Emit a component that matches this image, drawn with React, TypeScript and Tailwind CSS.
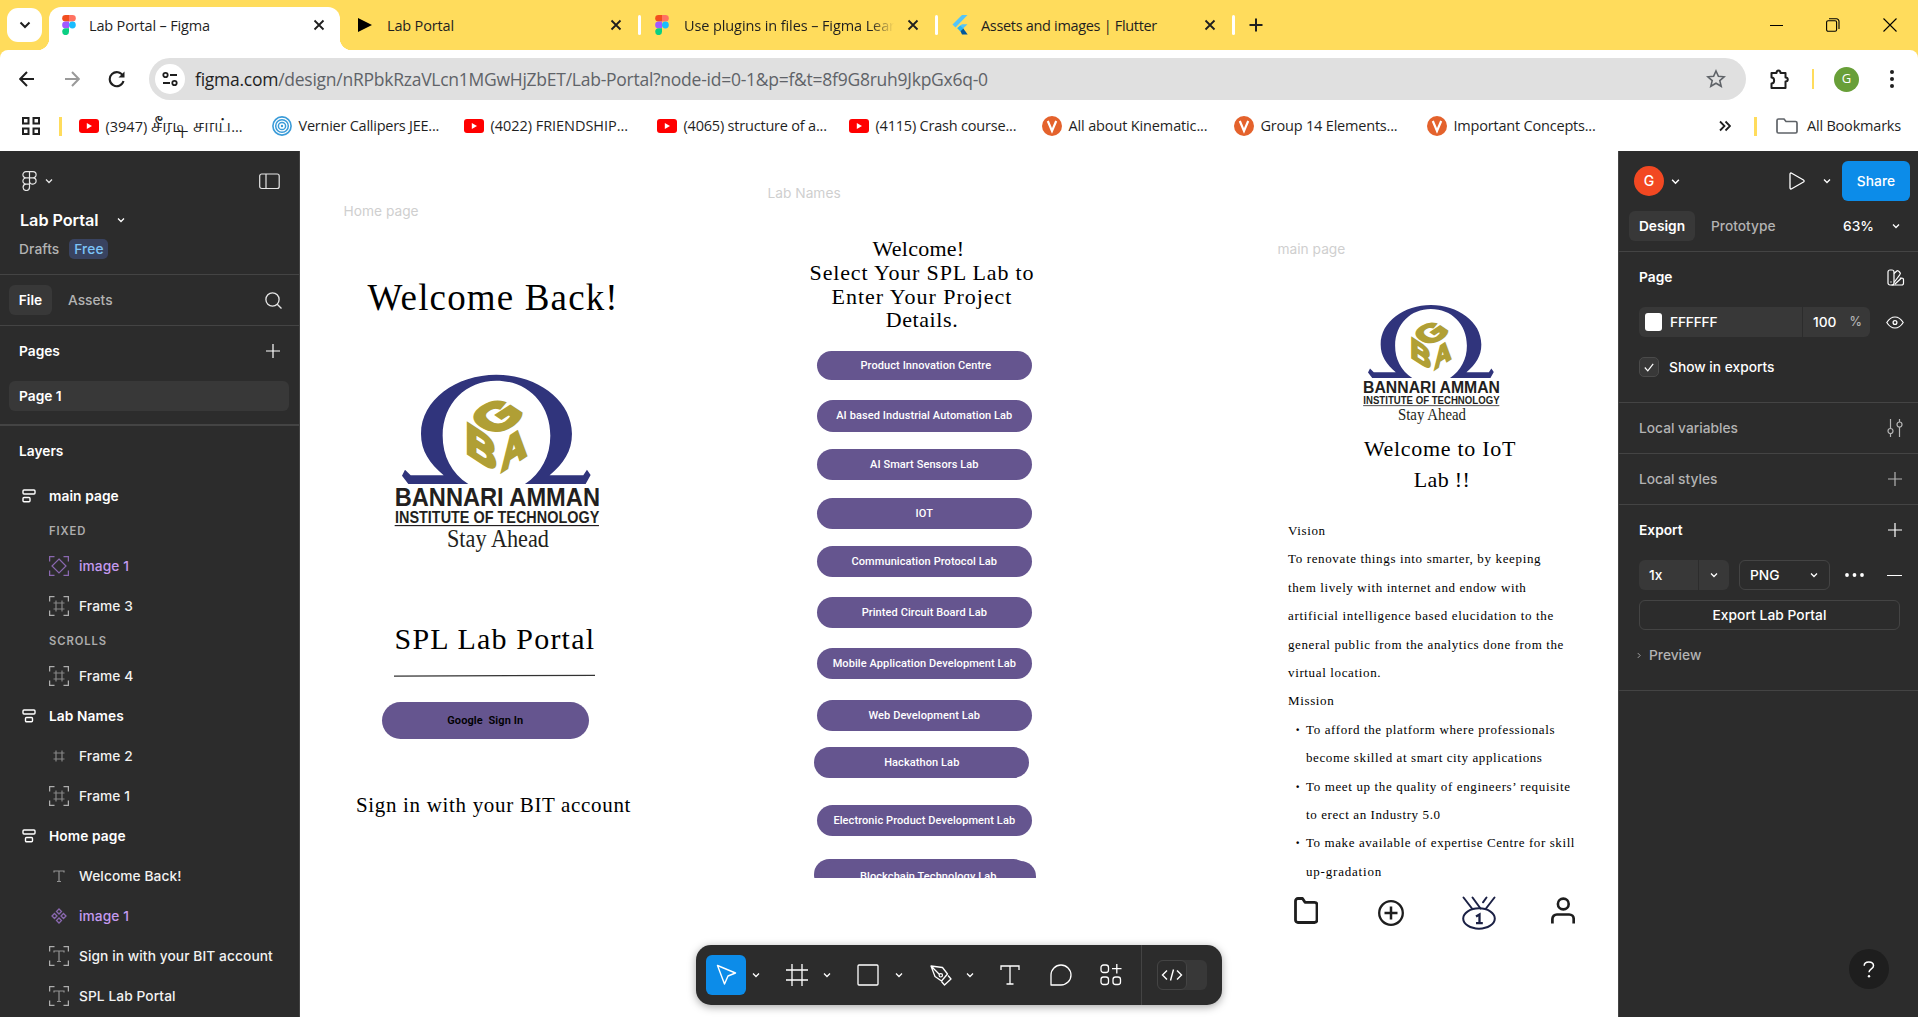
import type { ReactNode } from "react";

type IconProps = { className?: string; children?: ReactNode; box?: string };

function Line({ className = "", children, box = "0 0 24 24" }: IconProps) {
  return (
    <svg viewBox={box} className={`block shrink-0 ${className}`} fill="none" stroke="currentColor">
      {children}
    </svg>
  );
}

/* ---------- shared icons ---------- */

const Chevron = ({ className = "" }: { className?: string }) => (
  <Line box="0 0 8 8" className={`h-2 w-2 ${className}`}>
    <path d="M1 2.500 4 5.500 7 2.500" strokeWidth="1.300" />
  </Line>
);

const Close = () => (
  <Line box="0 0 12 12" className="h-3 w-3 text-[#1f1f1f]">
    <path d="M1.500 1.500l9 9M10.500 1.500l-9 9" strokeWidth="1.800" />
  </Line>
);

const Plus = ({ className = "" }: { className?: string }) => (
  <Line box="0 0 14 14" className={`h-[14px] w-[14px] ${className}`}>
    <path d="M7 0v14M0 7h14" strokeWidth="1.200" />
  </Line>
);

const FigmaLogo = () => (
  <svg viewBox="0 0 14 20" className="block h-5 w-[14px] shrink-0">
    <path d="M3.500 0H7v6.600H3.500a3.300 3.300 0 0 1 0-6.600z" fill="#f24e1e" />
    <path d="M7 0h3.500a3.300 3.300 0 0 1 0 6.600H7z" fill="#ff7262" />
    <path d="M3.500 6.600H7v6.700H3.500a3.300 3.300 0 0 1 0-6.700z" fill="#a259ff" />
    <circle cx="10.400" cy="10" r="3.400" fill="#1abcfe" />
    <path d="M3.500 13.300H7v3.400a3.400 3.400 0 1 1-3.500-3.400z" fill="#0acf83" />
  </svg>
);

const FlutterLogo = () => (
  <svg viewBox="0 0 16 20" className="block h-5 w-4 shrink-0">
    <path d="M10 0h5.500L3.500 12.500.5 9.600z" fill="#54c5f8" />
    <path d="M10 9.200h5.500L8.500 16 5.300 13z" fill="#54c5f8" />
    <path d="M5.300 13.200l3-2.600 3.200 3-3 2.800z" fill="#29b6f6" />
    <path d="M8.500 16.200l2.800-2.600 4.400 6H10z" fill="#01579b" />
  </svg>
);

/* ---------- browser chrome ---------- */

function Tab({ icon, title, fade, divider, track }: { icon: ReactNode; title: string; fade?: boolean; divider?: boolean; track: string }) {
  return (
    <div className="flex h-[50px] w-[297px] shrink-0 items-center">
      <div className="flex w-[294px] items-center pl-[14px]">
        <div className="flex w-[29px] shrink-0">{icon}</div>
        <div className={`w-[212px] overflow-hidden whitespace-nowrap pt-[2px] ${track} ${fade ? "[mask-image:linear-gradient(to_right,black_88%,transparent_99%)]" : ""}`}>{title}</div>
        <div className="ml-[11px]"><Close /></div>
      </div>
      {divider && <div className="h-5 w-[3px] rounded bg-white" />}
    </div>
  );
}

function TabStrip() {
  return (
    <div className="relative flex h-[50px] shrink-0 items-center text-[14.500px] text-[#1f1f1f]">
      <div className="ml-[7px] flex h-[34px] w-[35px] items-center justify-center rounded-[11px] bg-white">
        <Line box="0 0 12 12" className="h-3 w-3"><path d="M1.500 3.500 6 8l4.500-4.500" strokeWidth="2" /></Line>
      </div>
      <div className="relative ml-[7px] mt-[7px] flex h-[43px] w-[291px] shrink-0 items-center rounded-t-[12px] bg-white pb-[7px] pl-[13px]">
        <div className="absolute bottom-0 -left-3 h-3 w-3 bg-[radial-gradient(circle_at_0_0,transparent_12px,white_12.500px)]" />
        <div className="absolute -right-3 bottom-0 h-3 w-3 bg-[radial-gradient(circle_at_100%_0,transparent_12px,white_12.500px)]" />
        <div className="flex w-[27px]"><FigmaLogo /></div>
        <div className="w-[224px] whitespace-nowrap pt-[2px] tracking-[-0.16px]">Lab Portal – Figma</div>
        <Close />
      </div>
      <div className="ml-[4px] flex">
        <Tab icon={<svg viewBox="0 0 14 14" className="h-[14px] w-[14px]"><path d="M0 0l14 7-14 7z" fill="#000" /></svg>} title="Lab Portal" divider track="tracking-[-0.16px]" />
        <Tab icon={<FigmaLogo />} title="Use plugins in files – Figma Learn" fade divider track="tracking-[-0.1px]" />
        <Tab icon={<FlutterLogo />} title="Assets and images | Flutter" divider track="tracking-[-0.32px]" />
      </div>
      <Line box="0 0 14 14" className="ml-[14px] h-[14px] w-[14px]"><path d="M7 .5v13M.5 7h13" strokeWidth="2" /></Line>
      <div className="ml-auto mr-[21px] flex items-center gap-[43px] text-black">
        <div className="h-px w-[13px] bg-black" />
        <Line box="0 0 14 14" className="h-[14px] w-[14px]">
          <rect x=".6" y="2.800" width="10" height="10.500" rx="1.500" strokeWidth="1.100" />
          <path d="M3 .8h7.500a2.500 2.500 0 0 1 2.500 2.500V11" strokeWidth="1.100" />
        </Line>
        <Line box="0 0 14 14" className="h-[14px] w-[14px]"><path d="M.5.5l13 13M13.500.5l-13 13" strokeWidth="1.100" /></Line>
      </div>
    </div>
  );
}

function AddressBar() {
  return (
    <div className="flex h-[58px] shrink-0 items-center rounded-t-[8px] bg-white text-[#1f1f1f]">
      <Line box="0 0 16 16" className="ml-[19px] h-4 w-4"><path d="M15 8H1.500M8 1 1.200 8 8 15" strokeWidth="2" /></Line>
      <Line box="0 0 16 16" className="ml-[29px] h-4 w-4 text-[#9a9a9a]"><path d="M1 8h13.500M8 1l6.800 7L8 15" strokeWidth="2" /></Line>
      <Line box="0 0 18 18" className="ml-[28px] h-[18px] w-[18px]">
        <path d="M15.500 11a7 7 0 1 1-.5-5" strokeWidth="2.100" />
        <path d="M16.500 1.500v6h-6z" fill="currentColor" stroke="none" />
      </Line>
      <div className="ml-[23px] flex h-[42px] w-[1597px] items-center rounded-full bg-[#e0e0e0]">
        <div className="ml-[6px] flex h-[30px] w-[30px] items-center justify-center rounded-full bg-white">
          <Line box="0 0 16 16" className="h-4 w-4">
            <circle cx="3.500" cy="4" r="2.200" strokeWidth="1.800" /><path d="M8 4h7M1 12h7" strokeWidth="1.800" /><circle cx="12.500" cy="12" r="2.200" strokeWidth="1.800" />
          </Line>
        </div>
        <div className="ml-[10px] whitespace-nowrap text-[17.500px] tracking-[-0.255px] text-[#5f6368]">
          <span className="text-[#1f1f1f]">figma.com</span>/design/nRPbkRzaVLcn1MGwHjZbET/Lab-Portal?node-id=0-1&amp;p=f&amp;t=8f9G8ruh9JkpGx6q-0
        </div>
        <Line box="0 0 20 20" className="ml-auto mr-[20px] h-5 w-5 text-[#5f6368]">
          <path d="M10 2l2.400 5.300 5.800.5-4.400 3.800 1.400 5.700L10 14.200l-5.200 3.100 1.400-5.700L1.800 7.800l5.800-.5z" strokeWidth="1.600" />
        </Line>
      </div>
      <Line box="0 0 22 22" className="ml-[22px] h-[22px] w-[22px]">
        <path d="M3.500 5h5c0-3.500 4-3.500 4 0h5v4.500c3 0 3 4 0 4V20h-14v-4.500c3.500 0 3.500-6 0-6z" strokeWidth="2" strokeLinejoin="round" />
      </Line>
      <div className="ml-[22px] h-5 w-[2px] bg-[#ffdc5c]" />
      <div className="ml-[20px] flex h-[25px] w-[25px] items-center justify-center rounded-full bg-[#689f38] text-[13px] text-white">G</div>
      <svg viewBox="0 0 4 18" className="ml-[31px] h-[18px] w-1" fill="currentColor"><circle cx="2" cy="2" r="2" /><circle cx="2" cy="9" r="2" /><circle cx="2" cy="16" r="2" /></svg>
    </div>
  );
}

const YouTube = () => (
  <svg viewBox="0 0 20 14" className="block h-[14px] w-5 shrink-0"><rect width="20" height="14" rx="3" fill="#f00" /><path d="M7.800 4l5.200 3-5.200 3z" fill="#fff" /></svg>
);
const Rings = () => (
  <svg viewBox="0 0 20 20" className="block h-5 w-5 shrink-0" fill="none" stroke="#3a9bd8">
    <circle cx="10" cy="10" r="9.100" strokeWidth="1.600" /><circle cx="10" cy="10" r="6.300" strokeWidth="1.500" /><circle cx="10" cy="10" r="3.600" strokeWidth="1.500" /><circle cx="10" cy="10" r="1.200" fill="#3a9bd8" stroke="none" />
  </svg>
);
const Vedantu = () => (
  <svg viewBox="0 0 20 20" className="block h-5 w-5 shrink-0"><circle cx="10" cy="10" r="10" fill="#e4622c" /><path d="M5.800 5l4.200 10 4.200-10" fill="none" stroke="#fff" strokeWidth="2.200" /></svg>
);

const bookmarks: { icon: ReactNode; label: ReactNode; cls: string }[] = [
  { icon: <YouTube />, label: <>(3947) <span className="text-[20px] leading-none">சீரடி சாய்</span>...</>, cls: "w-[193px] tracking-[0px]" },
  { icon: <Rings />, label: "Vernier Callipers JEE...", cls: "w-[192px] tracking-[-0.24px]" },
  { icon: <YouTube />, label: "(4022) FRIENDSHIP...", cls: "w-[193px] tracking-[-0.04px]" },
  { icon: <YouTube />, label: "(4065) structure of a...", cls: "w-[192px] tracking-[-0.2px]" },
  { icon: <YouTube />, label: "(4115) Crash course...", cls: "w-[193px] tracking-[-0.2px]" },
  { icon: <Vedantu />, label: "All about Kinematic...", cls: "w-[192px] tracking-[-0.14px]" },
  { icon: <Vedantu />, label: "Group 14 Elements...", cls: "w-[193px] tracking-[-0.2px]" },
  { icon: <Vedantu />, label: "Important Concepts...", cls: "w-[193px] tracking-[-0.2px]" },
];

function Bookmarks() {
  return (
    <div className="flex h-[43px] shrink-0 items-center bg-white pb-[7px] text-[14.500px] text-[#1f1f1f]">
      <Line box="0 0 18 18" className="ml-[22px] h-[18px] w-[18px]">
        <path d="M1 1h5.500v5.500H1zM11.500 1H17v5.500h-5.500zM1 11.500h5.500V17H1zM11.500 11.500H17V17h-5.500z" strokeWidth="2" />
      </Line>
      <div className="ml-[19px] mr-[17px] h-[19px] w-[2.500px] bg-[#ffdc5c]" />
      {bookmarks.map((b, i) => (
        <div key={i} className={`flex h-5 shrink-0 items-center gap-[7px] whitespace-nowrap ${b.cls}`}>{b.icon}<span>{b.label}</span></div>
      ))}
      <Line box="0 0 12 12" className="ml-auto mr-[23px] h-3 w-3"><path d="M1 1.500 5.500 6 1 10.500M6.500 1.500 11 6l-4.500 4.500" strokeWidth="1.800" /></Line>
      <div className="h-[19px] w-[2.500px] bg-[#ffdc5c]" />
      <Line box="0 0 22 16" className="ml-[19px] h-4 w-[22px] text-[#5f6368]"><path d="M1 2.500A1.500 1.500 0 0 1 2.500 1H8l2 2.500h9.500A1.500 1.500 0 0 1 21 5v8.500a1.500 1.500 0 0 1-1.500 1.500h-17A1.500 1.500 0 0 1 1 13.500z" strokeWidth="1.700" /></Line>
      <span className="ml-[9px] mr-[17px] tracking-[-0.2px]">All Bookmarks</span>
    </div>
  );
}

/* ---------- left panel ---------- */

const hash = <path d="M7 4.500v11M13 4.500v11M4.500 7h11M4.500 13h11" strokeWidth="1.200" opacity=".7" />;
const corners = <path d="M.6 5.500V.6h4.900M14.500.6h4.900v4.900M19.400 14.500v4.900h-4.900M5.500 19.400H.6v-4.900" strokeWidth="1.300" />;
const tee = <path d="M5 6.500V5h10v1.500M10 5v10.500M8 15.500h4" strokeWidth="1.200" opacity=".8" />;

const layerIcons: Record<string, ReactNode> = {
  diamond: <>{corners}<path d="M10 3l7 7-7 7-7-7z" strokeWidth="1.200" /></>,
  frameC: <>{corners}{hash}</>,
  frame: hash,
  text: tee,
  textC: <>{corners}{tee}</>,
  component: <path d="M10 3l2.500 2.500L10 8 7.500 5.500zM10 12l2.500 2.500L10 17l-2.500-2.500zM5.500 7.500 8 10l-2.500 2.500L3 10zM14.500 7.500 17 10l-2.500 2.500L12 10z" strokeWidth="1.300" />,
};

function Layer({ icon, name, purple }: { icon: string; name: string; purple?: boolean }) {
  return (
    <div className={`flex h-10 items-center pl-[49px] ${purple ? "text-[#8a68b0]" : "text-[#adadad]"}`}>
      <Line box="0 0 20 20" className="h-5 w-5">{layerIcons[icon]}</Line>
      <span className={`ml-[10px] font-[450] tracking-[0.080px] ${purple ? "text-[#c49af0]" : "text-[#f2f2f2]"}`}>{name}</span>
    </div>
  );
}

function RootLayer({ name, left }: { name: string; left?: boolean }) {
  return (
    <div className="flex h-10 items-center pl-[22px] text-white">
      <Line box="0 0 14 14" className="h-[14px] w-[14px]">
        <rect x="1" y="1" width="12" height="4" rx="1" strokeWidth="1.400" />
        <rect x={left ? 1 : 3.5} y="8.500" width="7" height="4.200" rx="1" strokeWidth="1.400" />
      </Line>
      <span className="ml-[13px] font-semibold tracking-[0.080px]">{name}</span>
    </div>
  );
}

const Group = ({ children }: { children: string }) => (
  <div className="flex h-[30px] items-center pl-[49px] text-[11.250px] font-semibold tracking-[0.9px] text-[#adadad]">{children}</div>
);

function LeftPanel() {
  return (
    <aside className="flex w-[300px] shrink-0 flex-col overflow-hidden border-r border-[#444] bg-[#2c2c2c]">
      <div className="flex h-[59px] items-center pl-[22px] pr-[19px] pt-px">
        <Line box="0 0 15 20" className="h-5 w-[15px]">
          <path d="M4 .7h7a3 3 0 0 1 0 6.200H4A3 3 0 0 1 4 .7zM4 6.900h7a3 3 0 0 1 0 6.200 3 3 0 0 1-3.500-3.100M4 6.900a3 3 0 0 0 0 6.200h3.500M7.500.7v15.600A3.200 3.200 0 1 1 4 13.100" strokeWidth="1.200" />
        </Line>
        <Chevron className="ml-2" />
        <Line box="0 0 21 17" className="ml-auto h-[17px] w-[21px]"><rect x=".7" y="1" width="19.500" height="14.500" rx="2" strokeWidth="1.200" /><path d="M7 1v14.500" strokeWidth="1.200" /></Line>
      </div>
      <div className="flex h-5 items-center pl-5 text-[16.250px] font-semibold tracking-[-0.070px] text-white">Lab Portal<Chevron className="ml-[19px]" /></div>
      <div className="mt-[9px] flex h-5 items-center pl-[19px] font-[450] tracking-[0.12px] text-[#b3b3b3]">
        Drafts<span className="ml-[10px] flex h-5 w-[39px] items-center justify-center rounded-[5px] bg-[#394360] text-[#7cc4f8]">Free</span>
      </div>
      <div className="mt-[15px] flex h-[52px] shrink-0 items-center border-y border-[#444] pl-[9px] pr-[17px]">
        <div className="flex h-[30px] w-[43px] items-center justify-center rounded-[6px] bg-[#383838] font-semibold text-white">File</div>
        <span className="ml-4 font-medium text-[#b3b3b3]">Assets</span>
        <Line box="0 0 17 17" className="ml-auto h-[17px] w-[17px]"><circle cx="7.500" cy="7.500" r="6.600" strokeWidth="1.300" /><path d="M12.200 12.200l4.300 4.300" strokeWidth="1.300" /></Line>
      </div>
      <div className="flex h-[50px] shrink-0 items-center pl-[19px] pr-[19px] font-semibold text-white">Pages<Plus className="ml-auto" /></div>
      <div className="ml-[9px] mt-[5px] flex h-[30px] w-[280px] shrink-0 items-center rounded-[6px] bg-[#383838] pl-[10px] font-semibold text-white">Page 1</div>
      <div className="mt-[13px] h-[2px] shrink-0 bg-[#444]" />
      <div className="flex h-[50px] shrink-0 items-center pl-[19px] font-semibold text-white">Layers</div>
      <div className="h-[540px]">
        <RootLayer name="main page" left />
        <Group>FIXED</Group>
        <Layer icon="diamond" name="image 1" purple />
        <Layer icon="frameC" name="Frame 3" />
        <Group>SCROLLS</Group>
        <Layer icon="frameC" name="Frame 4" />
        <RootLayer name="Lab Names" />
        <Layer icon="frame" name="Frame 2" />
        <Layer icon="frameC" name="Frame 1" />
        <RootLayer name="Home page" />
        <Layer icon="text" name="Welcome Back!" />
        <Layer icon="component" name="image 1" purple />
        <Layer icon="textC" name="Sign in with your BIT account" />
        <Layer icon="textC" name="SPL Lab Portal" />
      </div>
    </aside>
  );
}

/* ---------- canvas ---------- */

function InstituteLogo({ className }: { className: string }) {
  return (
    <svg viewBox="160 580 625 540" className={`overflow-visible ${className}`}>
      <path d="M196 870L187 888L206 913H386C335 880 309 828 309 768C309 670 380 603 470 603C562 603 632 670 632 768C632 828 605 880 556 913H738L753 886L742 870L731 887H630C672 850 697 815 697 762C697 660 590 585 470 585C350 585 244 660 244 762C244 815 270 850 312 887H213Z" fill="#30347c" />
      <g fill="#b09f35" stroke="#b09f35" strokeWidth="8" fontFamily="Liberation Sans" fontWeight="700" fontSize="100">
        <text transform="matrix(1.28 -0.84 1.18 0.79 463 770)">G</text>
        <text transform="matrix(1.28 0.84 0 1.3 378 817)">B</text>
        <text transform="matrix(1.05 -0.69 0 1.28 485 876)">A</text>
      </g>
      <g fill="#231f20">
        <text x="165" y="979" fontFamily="Liberation Sans" fontWeight="700" fontSize="78" textLength="616" lengthAdjust="spacingAndGlyphs">BANNARI AMMAN</text>
        <text x="166" y="1029" fontFamily="Liberation Sans" fontWeight="700" fontSize="49" textLength="613" lengthAdjust="spacingAndGlyphs">INSTITUTE OF TECHNOLOGY</text>
        <rect x="165" y="1036" width="613" height="3.500" />
        <text x="322" y="1101" fontFamily="Liberation Serif" fontSize="77" textLength="306" lengthAdjust="spacingAndGlyphs">Stay Ahead</text>
      </g>
    </svg>
  );
}

const labs = [
  { name: "Product Innovation Centre", cls: "h-[28.500px] w-[215px] ml-[2.500px] pl-[3px]" },
  { name: "AI based Industrial Automation Lab", cls: "mt-[20.500px] h-[31.500px] w-[215px] ml-[2.500px]" },
  { name: "AI Smart Sensors Lab", cls: "mt-[17.500px] h-[31px] w-[215px] ml-[2.500px]" },
  { name: "IOT", cls: "mt-[17.500px] h-[31px] w-[215px] ml-[2.500px]" },
  { name: "Communication Protocol Lab", cls: "mt-[17px] h-[31px] w-[215px] ml-[2.500px]" },
  { name: "Printed Circuit Board Lab", cls: "mt-[20.300px] h-[31px] w-[215px] ml-[2.500px]" },
  { name: "Mobile Application Development Lab", cls: "mt-[20.500px] h-[31px] w-[215px] ml-[2.500px]" },
  { name: "Web Development Lab", cls: "mt-[20.500px] h-[31px] w-[215px] ml-[2.500px]" },
  { name: "Hackathon Lab", cls: "mt-[16.500px] h-[31px] w-[215px]" },
  { name: "Electronic Product Development Lab", cls: "mt-[26.500px] h-[31px] w-[215px] ml-[2.500px]" },
];

function Canvas() {
  return (
    <main className="relative flex-1 overflow-hidden bg-white font-['Liberation_Serif',serif] text-black">
      {/* Home page frame */}
      <div className="absolute left-[43.500px] top-[50px] font-['Inter',sans-serif] text-[#cfcfcf]">Home page</div>
      <div className="absolute left-[67.500px] top-[127px] whitespace-nowrap text-[37px] leading-[40px] tracking-[1.150px]">Welcome Back!</div>
      <InstituteLogo className="absolute left-[93.300px] top-[222.300px] h-[180px] w-[208.300px]" />
      <div className="absolute left-[94.500px] top-[470px] whitespace-nowrap text-[30px] leading-[36px] tracking-[1.200px]">SPL Lab Portal</div>
      <svg className="absolute left-[94px] top-[522px] h-[5px] w-[201px]"><path d="M0 3.200 201 2.300" stroke="#333" strokeWidth="1.200" /></svg>
      <div className="absolute left-[82px] top-[551.300px] flex h-[36.500px] w-[206.500px] items-center justify-center whitespace-pre rounded-full bg-[#65558f] pt-px font-['Roboto',sans-serif] text-[11px] font-semibold tracking-[0.1px]">Google  Sign In</div>
      <div className="absolute left-[56px] top-[642px] whitespace-nowrap text-[21px] leading-[24px] tracking-[0.670px]">Sign in with your BIT account</div>

      {/* Lab Names frame */}
      <div className="absolute left-[467.500px] top-[32px] font-['Inter',sans-serif] text-[#cfcfcf]">Lab Names</div>
      <div className="absolute left-[492px] top-[86px] w-[260px] text-center text-[22px] leading-[23.750px]">
        <div className="pr-[7px] tracking-[0.25px]">Welcome!</div>
        <div className="tracking-[0.840px]">Select Your SPL Lab to</div>
        <div className="tracking-[0.990px]">Enter Your Project</div>
        <div className="tracking-[0.6px]">Details.</div>
      </div>
      <div className="absolute left-[514.300px] top-[200px] h-[527px] w-[222px] overflow-hidden font-['Roboto',sans-serif] text-[11px] font-medium tracking-[0.090px] text-white">
        {labs.map((l) => (
          <div key={l.name} className={`flex items-center justify-center whitespace-nowrap rounded-full bg-[#65558f] pt-px ${l.cls}`}>{l.name}</div>
        ))}
        <div className="relative mt-[23.500px] h-[31px] w-[215px] rounded-full bg-[#65558f]">
          <div className="absolute left-[6.500px] top-[1.500px] flex h-[31px] w-[215px] items-center justify-center rounded-full bg-[#65558f] pt-px">Blockchain Technology Lab</div>
        </div>
      </div>

      {/* main page frame */}
      <div className="absolute left-[977.500px] top-[88px] font-['Inter',sans-serif] text-[#cfcfcf]">main page</div>
      <InstituteLogo className="absolute left-[1062px] top-[152.900px] h-[120px] w-[138.900px]" />
      <div className="absolute left-[1040px] top-[281.500px] w-[200px] text-center text-[22px] leading-[31.500px]">
        <div className="tracking-[0.7px]">Welcome to IoT</div>
        <div className="pl-[4px] tracking-[0.330px]">Lab !!</div>
      </div>
      <div className="absolute left-[988px] top-[366px] whitespace-nowrap text-[13px] leading-[28.400px] tracking-[0.640px]">
        <p>Vision</p>
        <p>To renovate things into smarter, by keeping</p>
        <p className="tracking-[0.6px]">them lively with internet and endow with</p>
        <p className="tracking-[0.660px]">artificial intelligence based elucidation to the</p>
        <p className="tracking-[0.610px]">general public from the analytics done from the</p>
        <p>virtual location.</p>
        <p>Mission</p>
        <ul>
          {[
            ["To afford the platform where professionals", "become skilled at smart city applications"],
            ["To meet up the quality of engineers’ requisite", "to erect an Industry 5.0"],
          ].map((b) => (
            <li key={b[0]} className="flex">
              <span className="ml-[7px] w-[11px] text-[16px] font-bold">·</span>
              <span>{b[0]}<br /><span className="tracking-[0.6px]">{b[1]}</span></span>
            </li>
          ))}
          <li className="flex">
            <span className="ml-[7px] w-[11px] text-[16px] font-bold">·</span>
            <span className="tracking-[0.590px]">To make available of expertise Centre for skill<br /><span className="tracking-[0.8px]">up-gradation</span></span>
          </li>
        </ul>
      </div>
      <Line box="0 0 24 27" className="absolute left-[993.500px] top-[746px] h-[27px] w-6 text-[#1e1e1e]"><path d="M1.500 4A2.500 2.500 0 0 1 4 1.500h4.500L11 5.300h9.500A2.500 2.500 0 0 1 23 7.800V23a2.500 2.500 0 0 1-2.500 2.500H4A2.500 2.500 0 0 1 1.500 23z" strokeWidth="2.800" strokeLinejoin="round" /></Line>
      <Line box="0 0 26 26" className="absolute left-[1078px] top-[749px] h-[26px] w-[26px] text-[#1e1e1e]"><circle cx="13" cy="13" r="11.800" strokeWidth="2.300" /><path d="M13 6.500v13M6.500 13h13" strokeWidth="2.500" /></Line>
      <Line box="0 0 34 34" className="absolute left-[1162px] top-[745px] h-[34px] w-[34px] text-[#1b2145]">
        <ellipse cx="17" cy="22.500" rx="15.800" ry="10.200" strokeWidth="2" />
        <path d="M1.500 1.500l8.500 11M10.500 1.500l8 11M32.500 1.500l-8.500 11M24.500 1.500l-3.500 4.800" strokeWidth="2" strokeLinecap="round" />
        <path d="M14 20.500l3.500-2V27M14 27.200h6.800" strokeWidth="2.300" />
      </Line>
      <Line box="0 0 24 27" className="absolute left-[1251px] top-[746px] h-[27px] w-6 text-[#1e1e1e]"><circle cx="12.300" cy="7" r="5.400" strokeWidth="2.600" /><path d="M1.400 26.500V22a4.500 4.500 0 0 1 4.500-4.500h12.300a4.500 4.500 0 0 1 4.500 4.500v4.500" strokeWidth="2.700" /></Line>

      <Toolbar />
    </main>
  );
}

function Toolbar() {
  return (
    <div className="absolute left-[396px] top-[794px] flex h-[60px] w-[526px] items-center rounded-[15px] bg-[#2c2c2c] text-white shadow-[0_2px_8px_rgba(0,0,0,0.35)]">
      <div className="ml-[10px] flex h-10 w-10 items-center justify-center rounded-[6px] bg-[#0c8ce9]">
        <Line box="0 0 22 22" className="h-[22px] w-[22px]"><path d="M2.500 1.500 20.500 9l-7.500 3-3.500 8z" strokeWidth="1.400" strokeLinejoin="round" /></Line>
      </div>
      <Chevron className="ml-[6px]" />
      <Line box="0 0 22 22" className="ml-[26px] h-[22px] w-[22px]"><path d="M6 0v22M16 0v22M0 6h22M0 16h22" strokeWidth="1.300" /></Line>
      <Chevron className="ml-[15px]" />
      <Line box="0 0 22 22" className="ml-[26px] h-[22px] w-[22px]"><rect x="1" y="1" width="20" height="20" rx="1" strokeWidth="1.300" /></Line>
      <Chevron className="ml-[16px]" />
      <Line box="0 0 22 22" className="ml-[27px] h-[22px] w-[22px]">
        <path d="M1 2l11.500 1.500 5 6.500-6 7-6.500-4.500L1 2zM1.500 2.500l8 8" strokeWidth="1.300" strokeLinejoin="round" /><circle cx="10.800" cy="11.300" r="1.700" strokeWidth="1.200" /><path d="M18 11.500l3 3.500-6.500 6-3-3.500" strokeWidth="1.300" strokeLinejoin="round" />
      </Line>
      <Chevron className="ml-[14px]" />
      <Line box="0 0 20 20" className="ml-[26px] h-5 w-5"><path d="M1 5V1h18v4M10 1v18M6.500 19h7" strokeWidth="1.300" /></Line>
      <Line box="0 0 22 22" className="ml-[30px] h-[22px] w-[22px]"><path d="M1 21V11a10 10 0 1 1 10 10z" strokeWidth="1.300" strokeLinejoin="round" /></Line>
      <Line box="0 0 22 22" className="ml-[28px] h-[22px] w-[22px]">
        <rect x="1" y="1" width="7.500" height="7.500" rx="2.500" strokeWidth="1.300" /><rect x="1" y="13" width="7.500" height="7.500" rx="2.500" strokeWidth="1.300" /><rect x="13" y="13" width="7.500" height="7.500" rx="2.500" strokeWidth="1.300" /><path d="M16.800 0v9.500M12 4.700h9.500" strokeWidth="1.300" />
      </Line>
      <div className="ml-[19px] h-[60px] w-px bg-[#444]" />
      <div className="ml-[15px] flex h-[30px] w-[50px] items-center rounded-[6px] bg-[#383838]">
        <div className="flex h-[30px] w-[30px] items-center justify-center rounded-[6px] border border-[#444] bg-[#2c2c2c]">
          <Line box="0 0 22 12" className="h-3 w-[22px]"><path d="M6 1.500 1.500 6 6 10.500M16 1.500 20.500 6 16 10.500M12.500.5l-3 11" strokeWidth="1.400" /></Line>
        </div>
      </div>
    </div>
  );
}

/* ---------- right panel ---------- */

function RightPanel() {
  return (
    <aside className="relative flex w-[300px] shrink-0 flex-col border-l border-[#444] bg-[#2c2c2c] font-medium text-white">
      <div className="flex h-[60px] items-center pl-[15px] pr-2">
        <div className="flex h-[30px] w-[30px] items-center justify-center rounded-full bg-[#f24822] text-[14px]">G</div>
        <Chevron className="ml-[7px] h-[9px] w-[9px]" />
        <Line box="0 0 16 18" className="ml-auto h-[18px] w-4"><path d="M1 2.200v13.600c0 1 .8 1.500 1.700 1L14.500 10c.8-.5.8-1.500 0-2L2.700 1.200C1.800.7 1 1.200 1 2.200z" strokeWidth="1.300" /></Line>
        <Chevron className="ml-[18px]" />
        <div className="ml-[11px] flex h-10 w-[68px] items-center justify-center rounded-[6px] bg-[#0c8ce9] tracking-[0.1px]">Share</div>
      </div>
      <div className="flex h-[41px] shrink-0 items-center border-b border-[#444] pb-[10px] pl-[10px] pr-[18px]">
        <div className="flex h-[30px] w-[66px] items-center justify-center rounded-[6px] bg-[#383838] font-semibold">Design</div>
        <span className="ml-4 text-[#b3b3b3]">Prototype</span>
        <span className="ml-auto">63%</span>
        <Chevron className="ml-[18px]" />
      </div>
      <div className="flex h-[151px] shrink-0 flex-col border-b border-[#444] pl-5">
        <div className="flex h-[50px] items-center pr-[13px] font-semibold">Page
          <Line box="0 0 18 17" className="ml-auto h-[17px] w-[18px]">
            <rect x="1" y="1" width="6" height="15" rx="2" strokeWidth="1.200" /><path d="M7 4.500l2.500-2.300c.8-.7 1.800-.6 2.400.1l1 1.200c.6.7.5 1.700-.2 2.300L7 13.500M12.800 9h1.700c1.300 0 2 .8 2 1.800v3.400c0 1-.8 1.800-2 1.800H4.500M8 15l6.500-6" strokeWidth="1.200" /><circle cx="4" cy="13" r=".7" fill="currentColor" stroke="none" />
          </Line>
        </div>
        <div className="mt-[5px] flex h-[30px] items-center pr-[14px]">
          <div className="flex h-[30px] w-[163px] items-center rounded-l-[6px] bg-[#383838] pl-[6px]"><span className="h-[18px] w-[17px] rounded-[3px] bg-white" /><span className="ml-2 -tracking-[0.2px]">FFFFFF</span></div>
          <div className="ml-px flex h-[30px] w-[67px] items-center rounded-r-[6px] bg-[#383838] pl-[10px]">100<span className="ml-[13px] text-[12.500px] text-[#b3b3b3]">%</span></div>
          <Line box="0 0 18 13" className="ml-auto h-[13px] w-[18px]"><path d="M.8 6.500C3 3 5.800 1 9 1s6 2 8.200 5.500C15 10 12.200 12 9 12S3 10 .8 6.500z" strokeWidth="1.200" /><circle cx="9" cy="6.500" r="1.900" strokeWidth="1.300" /></Line>
        </div>
        <div className="mt-5 flex h-5 items-center">
          <div className="flex h-5 w-5 items-center justify-center rounded-[5px] border border-[#4a4a4a] bg-[#383838]"><Line box="0 0 10 9" className="h-[9px] w-[10px]"><path d="M.8 4.500 3.800 7.800 9.200.8" strokeWidth="1.200" /></Line></div>
          <span className="ml-[10px]">Show in exports</span>
        </div>
      </div>
      <div className="flex h-[51px] shrink-0 items-center border-b border-[#444] pl-5 pr-[15px] text-[#b3b3b3]">Local variables
        <Line box="0 0 16 18" className="ml-auto h-[18px] w-4"><path d="M3.500 0v9.500M3.500 14.500V18M12.500 8v10M12.500 0v3" strokeWidth="1.200" /><circle cx="3.500" cy="12" r="2.500" strokeWidth="1.200" /><circle cx="12.500" cy="5.500" r="2.500" strokeWidth="1.200" /></Line>
      </div>
      <div className="flex h-[51px] shrink-0 items-center border-b border-[#444] pl-5 pr-4 text-[#b3b3b3]">Local styles<Plus className="ml-auto" /></div>
      <div className="flex h-[186px] shrink-0 flex-col border-b border-[#444] pl-5">
        <div className="flex h-[50px] items-center pr-4 font-semibold">Export<Plus className="ml-auto" /></div>
        <div className="mt-[5px] flex h-[30px] items-center">
          <div className="flex h-[30px] w-[59px] items-center rounded-l-[6px] bg-[#383838] pl-[10px]">1x</div>
          <div className="ml-px flex h-[30px] w-[30px] items-center justify-center rounded-r-[6px] bg-[#383838]"><Chevron /></div>
          <div className="ml-[10px] flex h-[30px] w-[91px] items-center rounded-[6px] border border-[#444] pl-[10px] pr-[11px]">PNG<Chevron className="ml-auto" /></div>
          <svg viewBox="0 0 19 4" className="ml-[15px] h-1 w-[19px]" fill="#fff"><circle cx="2" cy="2" r="1.900" /><circle cx="9.500" cy="2" r="1.900" /><circle cx="17" cy="2" r="1.900" /></svg>
          <div className="ml-[23px] h-px w-[15px] bg-white" />
        </div>
        <div className="mt-[10px] flex h-[30px] w-[261px] items-center justify-center rounded-[6px] border border-[#444] tracking-[0.060px]">Export Lab Portal</div>
        <div className="-ml-[2px] mt-[15px] flex h-5 items-center text-[#b3b3b3]"><Line box="0 0 5 8" className="h-[7px] w-1"><path d="M1 1l3 3-3 3" strokeWidth="1.100" /></Line><span className="ml-2 font-[550]">Preview</span></div>
      </div>
      <div className="absolute bottom-[28px] right-[29px] flex h-10 w-10 items-center justify-center rounded-full bg-[#1e1e1e]">
        <Line box="0 0 12 17" className="h-[17px] w-3"><path d="M1.200 4.800C1.200 2.500 3 1 5.800 1s4.700 1.500 4.700 3.800c0 3.200-4.500 3-4.500 6.500" strokeWidth="1.500" /><circle cx="6" cy="15.300" r="1.200" fill="currentColor" stroke="none" /></Line>
      </div>
    </aside>
  );
}

export default function App() {
  return (
    <div className="flex h-[1017px] w-[1918px] flex-col overflow-hidden bg-[#ffdc5c] font-['Open_Sans','Noto_Sans',sans-serif]">
      <TabStrip />
      <AddressBar />
      <Bookmarks />
      <div className="flex h-[866px] shrink-0 font-['Inter',sans-serif] text-[13.750px] leading-5 text-[#e6e6e6]">
        <LeftPanel />
        <Canvas />
        <RightPanel />
      </div>
    </div>
  );
}
